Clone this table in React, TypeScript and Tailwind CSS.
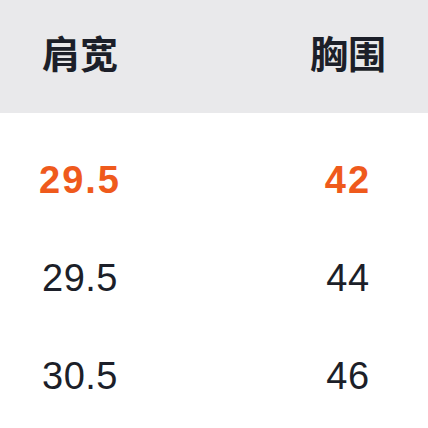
import React from 'react';

const rows = [
  { shoulder: '29.5', chest: '42', active: true },
  { shoulder: '29.5', chest: '44', active: false },
  { shoulder: '30.5', chest: '46', active: false },
];

export default function App() {
  return (
    <div className="w-[428px] h-[428px] overflow-hidden bg-white">
      {/* 表头 */}
      <div className="h-[113px] bg-[#e9e9eb] grid grid-cols-[160px_1fr_160px] items-center pb-[10px]">
        <div
          className="text-center text-[38px] font-bold text-[#1c1f29]"
          style={{ fontFamily: '"Noto Sans CJK SC", sans-serif' }}
        >
          肩宽
        </div>
        <div />
        <div
          className="text-center text-[38px] font-bold text-[#1c1f29]"
          style={{ fontFamily: '"Noto Sans CJK SC", sans-serif' }}
        >
          胸围
        </div>
      </div>

      {/* 尺码行 */}
      <div className="pt-[18px]">
        {rows.map((row, i) => (
          <div
            key={i}
            className={`h-[98px] grid grid-cols-[160px_1fr_160px] items-center text-[38px] font-['Liberation_Sans',Arial,sans-serif] ${
              row.active ? 'font-bold tracking-[2px] text-[#ef5a1c]' : 'tracking-[0.5px] text-[#1c1f29]'
            }`}
          >
            <div className="text-center">{row.shoulder}</div>
            <div />
            <div className="text-center">{row.chest}</div>
          </div>
        ))}
      </div>
    </div>
  );
}
